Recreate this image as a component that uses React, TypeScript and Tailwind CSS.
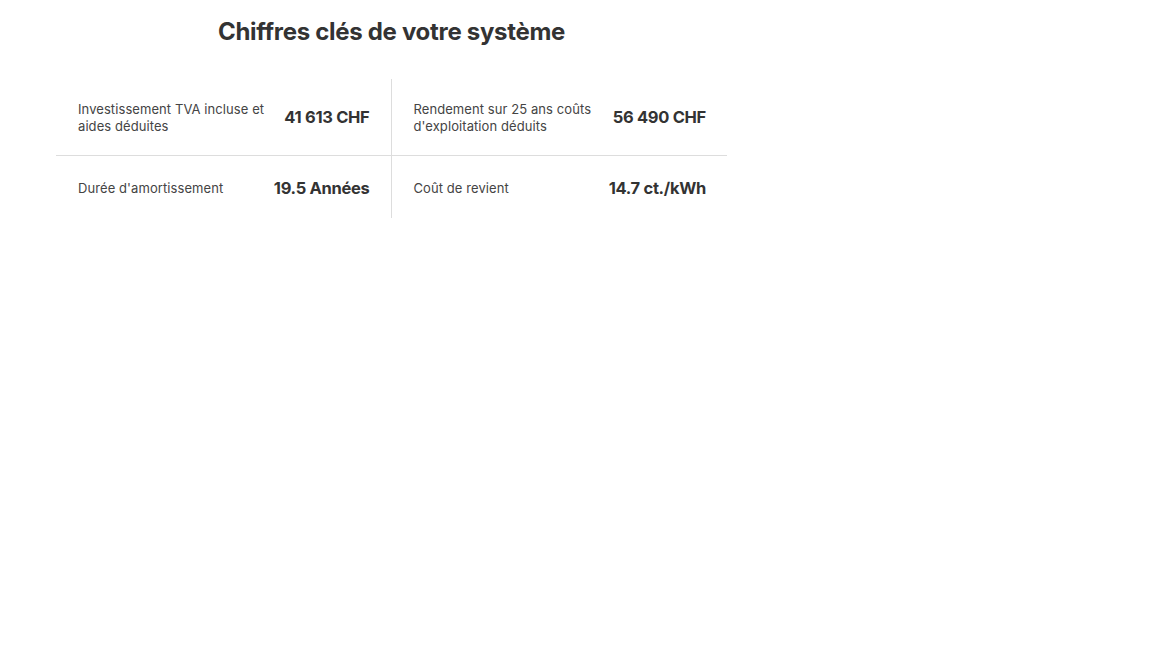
import React from "react";

const Cell = ({ label, value, right, bottom }: { label: React.ReactNode; value: string; right?: boolean; bottom?: boolean }) => (
  <div
    className={`flex items-center justify-between pl-[22px] pr-[21px] pt-[22px] pb-[20px] ${right ? "" : "border-r border-[#dddddd]"} ${bottom ? "" : "border-b border-[#dddddd]"}`}
  >
    <div className="text-[13px] leading-[17px] text-[#444444] w-[192px] tracking-[0.08px]">{label}</div>
    <div className={`text-[16.5px] leading-[20px] font-bold text-[#333333] whitespace-nowrap tracking-[-0.3px] ${bottom ? "" : "pb-[2px]"}`}>{value}</div>
  </div>
);

export default function App() {
  return (
    <div className="min-h-[648px] w-[1152px] bg-white" style={{ fontFamily: "Inter, 'Noto Sans', sans-serif" }}>
      <div className="ml-[56px] w-[671px]">
        <h2 className="pt-[16px] text-center text-[24px] leading-[32px] font-bold text-[#333333] tracking-[-0.3px]">
          Chiffres clés de votre système
        </h2>
        <div className="mt-[31px] grid grid-cols-2">
          <Cell label={<>Investissement TVA incluse et aides déduites</>} value="41 613 CHF" />
          <Cell label={<>Rendement sur 25 ans coûts d'exploitation déduits</>} value="56 490 CHF" right />
          <Cell label="Durée d'amortissement" value="19.5 Années" bottom />
          <Cell label="Coût de revient" value="14.7 ct./kWh" right bottom />
        </div>
      </div>
    </div>
  );
}
